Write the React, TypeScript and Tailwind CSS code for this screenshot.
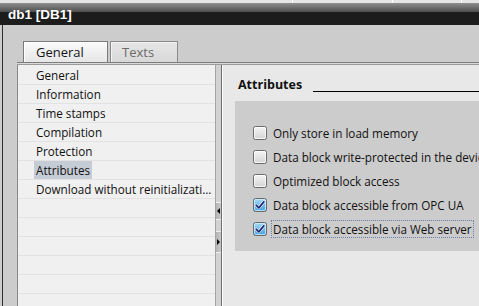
import React from "react";

const navItems = [
  "General",
  "Information",
  "Time stamps",
  "Compilation",
  "Protection",
  "Attributes",
  "Download without reinitializati...",
];

const options = [
  { label: "Only store in load memory", checked: false },
  { label: "Data block write-protected in the device", checked: false },
  { label: "Optimized block access", checked: false },
  { label: "Data block accessible from OPC UA", checked: true },
  { label: "Data block accessible via Web server", checked: true, focused: true },
];

const CheckBox = ({ checked }: { checked: boolean }) => (
  <svg width="14" height="14" viewBox="0 0 14 14" className="shrink-0">
    <defs>
      <linearGradient id="cbOff" x1="0" y1="0" x2="0" y2="1">
        <stop offset="0" stopColor="#f6f6f6" />
        <stop offset="1" stopColor="#d2d2d2" />
      </linearGradient>
      <linearGradient id="cbOn" x1="0" y1="0" x2="0" y2="1">
        <stop offset="0" stopColor="#a9dcf6" />
        <stop offset="1" stopColor="#3f9be0" />
      </linearGradient>
    </defs>
    <rect x="0.5" y="0.5" width="13" height="13" rx="2" fill={checked ? "url(#cbOn)" : "url(#cbOff)"} stroke="#6a6a6a" />
    <rect x="1.5" y="1.5" width="11" height="11" rx="1.5" fill="none" stroke={checked ? "#cdeefc" : "#ffffff"} strokeOpacity="0.8" />
    {checked && (
      <>
        <path d="M3.2 7.2 L5.8 9.8 L10.8 3.8" fill="none" stroke="#ffffff" strokeWidth="3" strokeLinecap="round" strokeLinejoin="round" />
        <path d="M3.2 7.2 L5.8 9.8 L10.8 3.8" fill="none" stroke="#1c2f78" strokeWidth="1.8" strokeLinecap="round" strokeLinejoin="round" />
      </>
    )}
  </svg>
);

export default function App() {
  return (
    <div className="w-[479px] h-[306px] overflow-hidden bg-[#cccccc] flex flex-col font-['Open_Sans',_sans-serif] text-[11.7px] text-[#111]">
      {/* strip above the title */}
      <div className="h-[3px] flex bg-[#e4e4e4]">
        <div className="w-[293px] border-r border-white" />
        <div className="w-[100px] border-r border-white" />
        <div className="w-[69px] border-r border-white" />
      </div>

      {/* title bar */}
      <div className="h-[22px] pl-[8px] bg-[linear-gradient(to_bottom,#8e8e8e_0px,#4e4e4e_9px,#1c1c1c_9px,#1c1c1c_100%)] text-white font-['Liberation_Sans',_sans-serif] font-bold text-[13.5px] leading-[24px]">
        db1 [DB1]
      </div>

      <div className="flex-1 min-h-0 flex ml-[2px] border-l border-[#2e2e2e]">
        <div className="flex-1 flex flex-col pt-[16px] pl-[14px]">
          {/* tabs */}
          <div className="flex pl-[6px] gap-[2px] h-[21px]">
            <div className="w-[85px] border border-b-0 border-[#7a7a7a] bg-[linear-gradient(to_bottom,#fafafa,#e6e6e6)] shadow-[inset_1px_1px_0_#ffffff] pl-[12px] text-[13px] leading-[20px] text-[#141414]">
              General
            </div>
            <div className="w-[68px] border border-b-0 border-[#8a8a8a] bg-[linear-gradient(to_bottom,#e6e6e6,#d8d8d8)] shadow-[inset_1px_1px_0_#f2f2f2] pl-[11px] text-[13px] leading-[20px] text-[#6a6a6a]">
              Texts
            </div>
          </div>
          <div className="h-[3px] border-t border-b border-t-[#7c7c7c] border-b-[#9a9a9a] bg-[#dadada]" />

          <div className="flex-1 min-h-0 flex">
            {/* navigation list */}
            <div className="w-[198px] border-l border-[#8a8a8a] bg-[#f0f0f0] pt-[1px] flex flex-col">
              {navItems.map((item) => (
                <div key={item} className="h-[19px] shrink-0 border-b border-[#e2e2e2] pl-[16px] flex items-center whitespace-nowrap">
                  <span className={`px-[2px] h-[18px] leading-[18px] ${item === "Attributes" ? "bg-[#c6ccd5]" : ""}`}>
                    {item}
                  </span>
                </div>
              ))}
              {Array.from({ length: 6 }).map((_, i) => (
                <div key={i} className="h-[19px] shrink-0 border-b border-[#e2e2e2]" />
              ))}
            </div>

            {/* splitter */}
            <div className="w-[7px] border-l border-[#a4a4a4] border-r border-r-[#6e6e6e] bg-[#d2d2d2] flex flex-col pt-[137px] gap-[11px]">
              <div className="h-[18px] bg-[linear-gradient(to_right,#b4b4b4,#c8c8c8)] border-t border-b border-[#f0f0f0] flex items-center pl-[1px]">
                <div className="w-0 h-0 border-y-[3px] border-y-transparent border-r-[3px] border-r-black" />
              </div>
              <div className="h-[22px] bg-[linear-gradient(to_right,#b4b4b4,#c8c8c8)] border-t border-b border-[#f0f0f0] flex items-center pl-[1px]">
                <div className="w-0 h-0 border-y-[3px] border-y-transparent border-l-[3px] border-l-black" />
              </div>
            </div>
            <div className="w-px bg-white" />

            {/* attributes panel */}
            <div className="flex-1 min-w-0 bg-[#e8e8e8] flex flex-col pt-[10px]">
              <div className="h-[20px] flex items-center pl-[15px]">
                <span className="font-bold text-[12.5px] text-[#111]">Attributes</span>
                <div className="flex-1 h-px bg-black ml-[11px] self-end mb-[3px]" />
              </div>
              <div className="ml-[12px] mt-[6px] h-[150px] bg-[#cccccc] pt-[20px] pl-[18px] flex flex-col">
                {options.map((o) => (
                  <div key={o.label} className="h-[24px] flex items-center gap-[4px] whitespace-nowrap">
                    <CheckBox checked={o.checked} />
                    <span
                      className={`px-[1px] border leading-[16px] ${
                        o.focused ? "border-dotted border-[#6d7fa8]" : "border-transparent"
                      }`}
                    >
                      {o.label}
                    </span>
                  </div>
                ))}
              </div>
            </div>
          </div>
        </div>
      </div>
    </div>
  );
}
